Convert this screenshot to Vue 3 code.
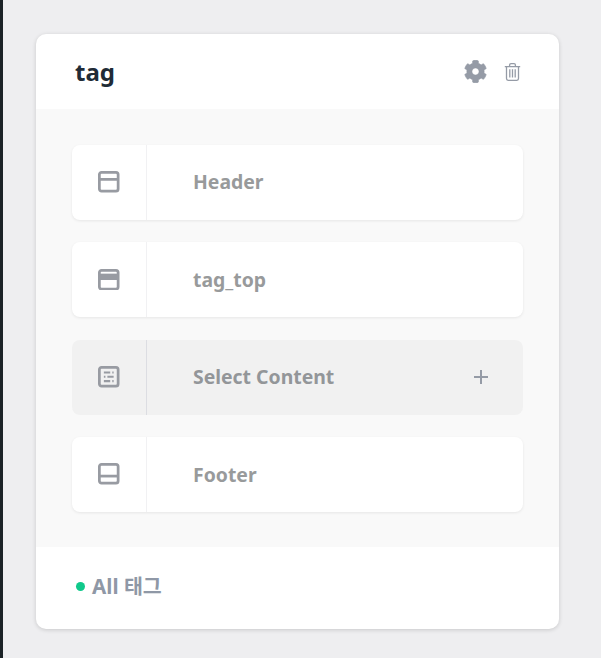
<template>
  <div class="page">
    <div class="edge"></div>
    <div class="card">
      <div class="card-head">
        <span class="title">tag</span>
        <div class="actions">
          <svg class="gear" viewBox="0 0 512 512" fill="currentColor" stroke="currentColor" stroke-width="14">
            <path d="M487.4 315.7l-42.6-24.6c4.3-23.2 4.3-47 0-70.2l42.6-24.6c4.9-2.8 7.1-8.6 5.5-14-11.1-35.6-30-67.8-54.7-94.6-3.8-4.1-10-5.1-14.8-2.3L380.8 110c-17.9-15.4-38.5-27.3-60.8-35.1V25.8c0-5.6-3.9-10.5-9.4-11.7-36.7-8.2-74.3-7.8-109.2 0-5.5 1.2-9.4 6.1-9.4 11.7V75c-22.2 7.9-42.8 19.8-60.8 35.1L88.7 85.5c-4.9-2.8-11-1.9-14.8 2.3-24.7 26.7-43.6 58.9-54.7 94.6-1.7 5.4.6 11.2 5.5 14L67.3 221c-4.3 23.2-4.3 47 0 70.2l-42.6 24.6c-4.9 2.8-7.1 8.6-5.5 14 11.1 35.6 30 67.8 54.7 94.6 3.8 4.1 10 5.1 14.8 2.3l42.6-24.6c17.9 15.4 38.5 27.3 60.8 35.1v49.2c0 5.6 3.9 10.5 9.4 11.7 36.7 8.2 74.3 7.8 109.2 0 5.5-1.2 9.4-6.1 9.4-11.7v-49.2c22.2-7.9 42.8-19.8 60.8-35.1l42.6 24.6c4.9 2.8 11 1.9 14.8-2.3 24.7-26.7 43.6-58.9 54.7-94.6 1.5-5.5-.7-11.3-5.6-14.1zM256 336c-44.1 0-80-35.9-80-80s35.9-80 80-80 80 35.9 80 80-35.9 80-80 80z"/>
          </svg>
          <svg class="trash" viewBox="0 0 17 18" fill="none" stroke="currentColor" stroke-width="1.3">
            <path d="M.8 3.6h15.4M5.6 3.4V2.1c0-.8.6-1.4 1.4-1.4h3c.8 0 1.4.6 1.4 1.4v1.3M2.5 3.6v12c0 .9.7 1.7 1.6 1.7h8.8c.9 0 1.6-.8 1.6-1.7v-12M5.8 6.2v8.4M8.5 6.2v8.4M11.2 6.2v8.4"/>
          </svg>
        </div>
      </div>

      <div class="card-body">
        <div v-for="row in rows" :key="row.label" class="row" :class="{ empty: row.empty }">
          <div class="row-icon">
            <svg viewBox="0 0 22 22" fill="none" stroke="currentColor" stroke-width="2.8">
              <rect x="1.4" y="1.4" width="19.2" height="19.2" rx="2.2" />
              <path v-if="row.icon === 'header'" d="M1 8.6h20" />
              <path v-if="row.icon === 'top'" d="M1 8h20" stroke-width="6.5" />
              <path v-if="row.icon === 'footer'" d="M1 13.4h20" />
              <path v-if="row.icon === 'content'" d="M6 6.6h6.5M14.6 6.6H16M6 11h1.6M9.6 11H16M6 15.4h6.5M14.6 15.4H16" stroke-width="2.2" />
            </svg>
          </div>
          <span class="row-label">{{ row.label }}</span>
          <svg v-if="row.empty" class="plus" viewBox="0 0 14 14" fill="none" stroke="currentColor" stroke-width="2">
            <path d="M0 7h14M7 0v14" />
          </svg>
        </div>
      </div>

      <div class="card-foot">
        <i class="dot"></i>
        <span class="status">All 태그</span>
      </div>
    </div>
  </div>
</template>

<script setup>
const rows = [
  { label: 'Header', icon: 'header' },
  { label: 'tag_top', icon: 'top' },
  { label: 'Select Content', icon: 'content', empty: true },
  { label: 'Footer', icon: 'footer' },
]
</script>

<style>
html, body {
  background: #eeeef0;
}
</style>

<style scoped>
.page {
  display: flex;
  min-height: 658px;
  background: #eeeef0;
  font-family: "Noto Sans", "Noto Sans CJK KR", sans-serif;
}

.edge {
  width: 3px;
  flex-shrink: 0;
  background: #1b2226;
}

.card {
  width: 523px;
  height: 595px;
  margin: 34px 0 0 33px;
  display: flex;
  flex-direction: column;
  background: #fff;
  border-radius: 10px;
  overflow: hidden;
  box-shadow: 0 1px 4px rgba(0, 0, 0, 0.16);
}

.card-head {
  height: 75px;
  flex-shrink: 0;
  display: flex;
  align-items: center;
  justify-content: space-between;
  padding: 0 38px 0 39px;
}

.title {
  font-size: 24px;
  font-weight: 700;
  line-height: 1;
  color: #212b36;
}

.actions {
  display: flex;
  align-items: center;
  gap: 17px;
  color: #959ba6;
}

.gear {
  width: 23px;
  height: 23px;
}

.trash {
  width: 17px;
  height: 18px;
}

.card-body {
  height: 438px;
  flex-shrink: 0;
  box-sizing: border-box;
  display: flex;
  flex-direction: column;
  gap: 22.4px;
  padding: 36px;
  background: #f9f9f9;
}

.row {
  height: 75px;
  flex-shrink: 0;
  display: flex;
  align-items: center;
  background: #fff;
  border-radius: 8px;
  box-shadow: 0 1px 3px rgba(0, 0, 0, 0.08);
}

.row.empty {
  background: #f1f1f1;
  box-shadow: none;
}

.row-icon {
  width: 74px;
  height: 100%;
  flex-shrink: 0;
  display: flex;
  align-items: center;
  justify-content: center;
  border-right: 1px solid #f1f1f3;
  color: #989ba2;
}

.row.empty .row-icon {
  border-right-color: #dcdde2;
}

.row-icon svg {
  width: 21.5px;
  height: 21.5px;
  margin-top: -1px;
}

.row-label {
  margin-left: 46px;
  margin-top: -1.3px;
  font-size: 19.4px;
  font-weight: 700;
  color: #989a9b;
}

.row.empty .row-label {
  color: #939699;
}

.plus {
  width: 14px;
  height: 14px;
  margin-left: auto;
  margin-right: 35px;
  color: #959ba6;
}

.card-foot {
  flex: 1;
  display: flex;
  align-items: center;
  padding-left: 40px;
}

.dot {
  width: 9px;
  height: 9px;
  margin-top: -4px;
  border-radius: 50%;
  background: #10c98b;
}

.status {
  margin-left: 7px;
  margin-top: -6px;
  font-size: 20.6px;
  font-weight: 700;
  color: #8f98a6;
}
</style>
